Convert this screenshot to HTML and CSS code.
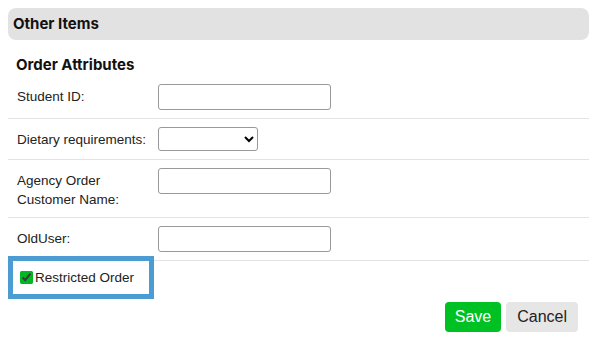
FILE: index.html
```html
<!DOCTYPE html>
<html lang="en">
<head>
    <meta charset="UTF-8">
    <meta name="viewport" content="width=device-width, initial-scale=1.0">
    <title>Other Items</title>
    <link rel="stylesheet" href="styles.css">
</head>
<body>

    <div class="panel">
        <h2 class="panel-title">Other Items</h2>

        <h3 class="section-title">Order Attributes</h3>

        <div class="attr-row">
            <label for="student-id">Student ID:</label>
            <input type="text" id="student-id" class="text-input">
        </div>

        <div class="attr-row">
            <label for="dietary">Dietary requirements:</label>
            <select id="dietary" class="select-input">
                <option></option>
            </select>
        </div>

        <div class="attr-row">
            <label for="agency-name">Agency Order Customer Name:</label>
            <input type="text" id="agency-name" class="text-input">
        </div>

        <div class="attr-row">
            <label for="old-user">OldUser:</label>
            <input type="text" id="old-user" class="text-input">
        </div>

        <div class="check-row">
            <input type="checkbox" id="restricted" checked>
            <label for="restricted">Restricted Order</label>
        </div>

        <div class="actions">
            <button class="btn btn-save">Save</button>
            <button class="btn btn-cancel">Cancel</button>
        </div>
    </div>

</body>
</html>
```

FILE: styles.css
```css
body {
    margin: 8px;
    font-family: "Liberation Sans", Arial, sans-serif;
    font-size: 13.5px;
    color: #222;
    background-color: white;
}

.panel {
    width: 581px;
}

.panel-title {
    margin: 0;
    height: 32px;
    line-height: 32px;
    padding: 0 5px;
    background-color: #e2e2e2;
    border-radius: 8px;
    font-family: Inter, "Noto Sans", sans-serif;
    font-size: 15px;
    font-weight: 700;
    color: #111;
}

.section-title {
    margin: 15px 0 1px 8px;
    line-height: 20px;
    font-family: Inter, "Noto Sans", sans-serif;
    font-size: 15px;
    font-weight: 700;
    color: #111;
}

.attr-row {
    display: grid;
    grid-template-columns: 141px 1fr;
    align-items: start;
    padding: 8px 0 8px 9px;
    border-bottom: 1px solid #e3e3e3;
    line-height: 19px;
}

.attr-row label {
    margin-top: 3px;
    padding-right: 4px;
}

.text-input {
    box-sizing: border-box;
    width: 173px;
    height: 26px;
    margin: 0;
    border: 1px solid #999;
    border-radius: 3px;
    font-size: 14px;
}

.select-input {
    box-sizing: border-box;
    width: 100px;
    height: 24px;
    margin: 0;
    border: 1px solid #999;
    border-radius: 3px;
    background-color: white;
    font-size: 14px;
}

.check-row {
    display: flex;
    align-items: center;
    gap: 2px;
    width: 129px;
    height: 33px;
    margin-left: 5px;
    padding-left: 7px;
    outline: 5px solid #4b9cd3;
}

.check-row input {
    width: 13px;
    height: 13px;
    margin: 0;
    accent-color: #00b822;
}

.actions {
    display: flex;
    justify-content: flex-end;
    gap: 5px;
    margin-top: 8px;
    padding-right: 11px;
}

.btn {
    height: 30px;
    padding: 0 10px;
    border: none;
    border-radius: 4px;
    font-family: "Liberation Sans", Arial, sans-serif;
    font-size: 16px;
    cursor: pointer;
}

.btn-save {
    background-color: #00c124;
    color: white;
}

.btn-cancel {
    padding: 0 11px;
    background-color: #e6e6e6;
    color: #222;
}
```
